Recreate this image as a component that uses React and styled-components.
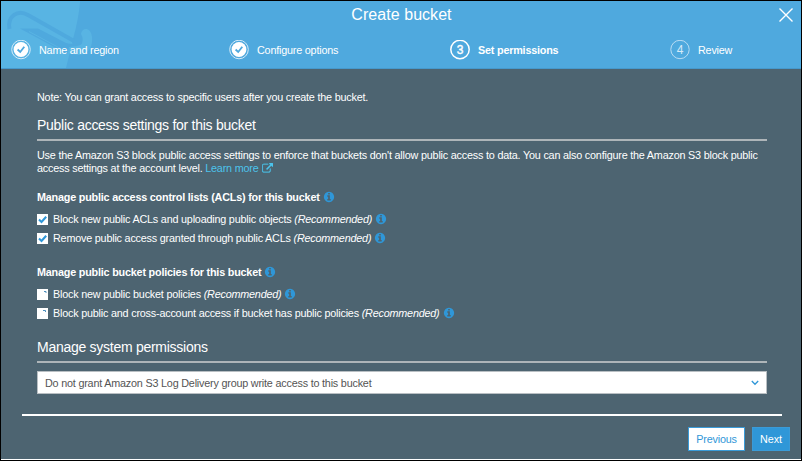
import React from "react";
import styled, { createGlobalStyle } from "styled-components";

const GlobalStyle = createGlobalStyle`
  *, *::before, *::after { box-sizing: border-box; }
  body { margin: 0; }
`;

const Dialog = styled.div`
  width: 802px;
  height: 461px;
  display: flex;
  flex-direction: column;
  border: 1px solid #000;
  background: #4d6471;
  color: #fff;
  font-family: "Liberation Sans", Arial, sans-serif;
  font-size: 10.8px;
  letter-spacing: -0.2px;
  box-shadow: inset 0 -1px 0 #fff;
`;

const Header = styled.header`
  position: relative;
  height: 68px;
  background: #4fa9de;
  border-bottom: 1px solid #4699cd;
`;

const BucketArt = styled.svg`
  position: absolute;
  left: 0;
  top: 0;
`;

const TitleBar = styled.div`
  position: relative;
  height: 28px;
  display: grid;
  grid-template-columns: 1fr auto 1fr;
  align-items: center;
  padding: 0 7px 0 8px;
`;

const Title = styled.h1`
  grid-column: 2;
  margin: 0;
  font-size: 16px;
  line-height: 26px;
  font-weight: 400;
  letter-spacing: 0.05px;
`;

const CloseButton = styled.button`
  justify-self: end;
  width: 16px;
  height: 16px;
  padding: 0;
  border: 0;
  background: none;
  display: flex;
`;

const Steps = styled.ol`
  position: relative;
  margin: 0;
  padding: 0 0 0 10px;
  list-style: none;
  height: 40px;
  display: grid;
  grid-template-columns: 218px 221px 220px auto;
`;

const Step = styled.li`
  height: 41px;
  display: flex;
  align-items: center;
  gap: 8px;
  font-weight: ${(p) => (p.$current ? 700 : 400)};
`;

const Body = styled.main`
  padding: 20px 34px 0 36px;
  height: 345px;
`;

const Note = styled.p`
  margin: 0;
  line-height: 16px;
`;

const SectionTitle = styled.h2`
  margin: ${(p) => p.$top}px 0 0;
  height: 27px;
  line-height: 23px;
  font-size: 14px;
  letter-spacing: -0.27px;
  font-weight: 400;
  border-bottom: 2px solid #aeb5b9;
`;

const Description = styled.p`
  margin: 8px 0 0;
  line-height: 13px;
  white-space: nowrap;
`;

const LearnMore = styled.a`
  color: #4cc3ec;
  svg { vertical-align: -2px; margin-left: 1px; }
`;

const GroupTitle = styled.h3`
  margin: ${(p) => p.$top}px 0 5px;
  display: flex;
  align-items: center;
  gap: 3px;
  height: 14px;
  font-size: 10.8px;
  font-weight: 700;
`;

const Option = styled.label`
  display: flex;
  align-items: center;
  height: 19px;
  white-space: pre;
`;

const Box = styled.span`
  width: 11px;
  height: 11px;
  margin: 1px 5px 0 0;
  display: flex;
  background: #fff;
`;

const OptionText = styled.span`
  margin-right: 3px;
`;

const Select = styled.div`
  margin-top: 8px;
  height: 23px;
  padding: 0 7px;
  display: flex;
  align-items: center;
  justify-content: space-between;
  background: #fff;
  border: 1px solid #b9bfc3;
  color: #545454;
`;

const Footer = styled.footer`
  margin: 0 11px 0 21px;
  display: flex;
  flex-direction: column;
`;

const FooterRule = styled.div`
  height: 2px;
  margin-right: 8px;
  background: #fff;
`;

const Actions = styled.div`
  margin-top: 11px;
  display: flex;
  justify-content: flex-end;
  gap: 7px;
`;

const Button = styled.button`
  width: ${(p) => p.$width}px;
  height: 24px;
  padding: 0;
  border: 1px solid #3a9bd8;
  background: ${(p) => (p.$primary ? "#2f97d8" : "#fff")};
  color: ${(p) => (p.$primary ? "#fff" : "#2f97d8")};
  font: 10.8px "Liberation Sans", Arial, sans-serif;
  letter-spacing: ${(p) => (p.$primary ? 0 : -0.2)}px;
`;

const Info = () => (
  <svg width="12" height="12" viewBox="0 0 1792 1792" fill="#2f97d8">
    <path d="M1152 1376v-160q0-14-9-23t-23-9h-96v-512q0-14-9-23t-23-9h-320q-14 0-23 9t-9 23v160q0 14 9 23t23 9h96v320h-96q-14 0-23 9t-9 23v160q0 14 9 23t23 9h448q14 0 23-9t9-23zm-128-896v-160q0-14-9-23t-23-9h-192q-14 0-23 9t-9 23v160q0 14 9 23t23 9h192q14 0 23-9t9-23zm640 416q0 209-103 385.5t-279.5 279.5-385.5 103-385.5-103-279.5-279.5-103-385.5 103-385.5 279.5-279.5 385.5-103 385.5 103 279.5 279.5 103 385.5z" />
  </svg>
);

const External = () => (
  <svg width="11" height="11" viewBox="0 0 1792 1792" fill="#4cc3ec" stroke="#4cc3ec" strokeWidth="40">
    <path d="M1408 928v320q0 119-84.5 203.5t-203.500 84.500h-832q-119 0-203.500-84.500t-84.500-203.500v-832q0-119 84.500-203.500t203.500-84.500h704q14 0 23 9t9 23v64q0 14-9 23t-23 9h-704q-66 0-113 47t-47 113v832q0 66 47 113t113 47h832q66 0 113-47t47-113v-320q0-14 9-23t23-9h64q14 0 23 9t9 23zm384-864v512q0 26-19 45t-45 19-45-19l-176-176-652 652q-10 10-23 10t-23-10l-114-114q-10-10-10-23t10-23l652-652-176-176q-19-19-19-45t19-45 45-19h512q26 0 45 19t19 45z" />
  </svg>
);

const DoneMark = () => (
  <svg width="20" height="20" viewBox="0 0 20 20" fill="none">
    <circle cx="10" cy="9.500" r="9.300" stroke="#d3eaf8" strokeWidth="1" />
    <circle cx="10" cy="9.500" r="7.400" fill="#fff" />
    <path d="M6.600 9.500 9.200 12 13.300 6.700" stroke="#4fa9de" strokeWidth="1.800" />
  </svg>
);

const StepNumber = styled.text`
  font-size: 12px;
  letter-spacing: 0;
  font-weight: 400;
  text-anchor: middle;
  stroke-width: 0.4px;
  stroke: ${(p) => (p.$current ? "#fff" : "none")};
  fill: ${(p) => (p.$current ? "#fff" : "#d6ebf8")};
`;

const NumberMark = ({ n, current }) => (
  <svg width="20" height="20" viewBox="0 0 20 20" fill="none">
    <circle cx="10" cy="9.500" r="9.200" stroke={current ? "#fff" : "#b9dcf3"} strokeWidth={current ? 1.5 : 1} />
    <StepNumber x="10" y="14" $current={current}>{n}</StepNumber>
  </svg>
);

const steps = [
  { label: "Name and region", done: true },
  { label: "Configure options", done: true },
  { label: "Set permissions", current: true },
  { label: "Review" },
];

const CheckOption = ({ checked, tick, children }) => (
  <Option>
    <Box>
      <svg width="11" height="11" viewBox="0 0 11 11" fill="none">
        {checked ? (
          <path d="M2 5.600 4.500 8 9.200 2.800" stroke="#2f97d8" strokeWidth="2.100" />
        ) : (
          <path d={tick} stroke="#4d8fbd" strokeWidth="1" />
        )}
      </svg>
    </Box>
    <OptionText>
      {children} <i>(Recommended)</i>
    </OptionText>
    <Info />
  </Option>
);

export default function App() {
  return (
    <>
      <GlobalStyle />
      <Dialog>
        <Header>
          <BucketArt width="100" height="67" viewBox="1 1 100 67" fill="none">
            <path d="M0 0H80.300Q78.500 20 73 39L66 68H0Z" fill="#58b4e3" />
            <path d="M81 34C82 27 91 27 92 37C93 48 88 54 79 55L66 53L71 43C79 47 86 42 81 34Z" fill="#58b4e3" />
            <path d="M9.500 29C7 16 18 9 28 15L74 41" stroke="#4fa9de" strokeWidth="4" />
            <path d="M20 28.500H38L66 43Q77 46 82 40Q84 45 77 46L69 47L67 54Z" fill="#4fa9de" />
            <path d="M29 31.500L67 52" stroke="#58b4e3" strokeWidth="1" />
          </BucketArt>
          <TitleBar>
            <span />
            <Title>Create bucket</Title>
            <CloseButton aria-label="Close">
              <svg width="16" height="16" viewBox="0 0 16 16" stroke="#fff" strokeWidth="1.400">
                <path d="M1.500 1.500 14.500 14.500M14.500 1.500 1.500 14.500" />
              </svg>
            </CloseButton>
          </TitleBar>
          <Steps>
            {steps.map((s, i) => (
              <Step key={s.label} $current={s.current}>
                {s.done ? <DoneMark /> : <NumberMark n={i + 1} current={s.current} />}
                {s.label}
              </Step>
            ))}
          </Steps>
        </Header>
        <Body>
          <Note>Note: You can grant access to specific users after you create the bucket.</Note>
          <SectionTitle $top={9}>Public access settings for this bucket</SectionTitle>
          <Description>
            Use the Amazon S3 block public access settings to enforce that buckets don't allow public access to data. You can also configure the Amazon S3 block public
            <br />
            access settings at the account level. <LearnMore>Learn more <External /></LearnMore>
          </Description>
          <GroupTitle $top={15}>Manage public access control lists (ACLs) for this bucket <Info /></GroupTitle>
          <CheckOption checked>Block new public ACLs and uploading public objects</CheckOption>
          <CheckOption checked>Remove public access granted through public ACLs</CheckOption>
          <GroupTitle $top={18}>Manage public bucket policies for this bucket <Info /></GroupTitle>
          <CheckOption tick="M7 2.500H9V4">Block new public bucket policies</CheckOption>
          <CheckOption tick="M6 2.500H8.500V4">Block public and cross-account access if bucket has public policies</CheckOption>
          <SectionTitle $top={14}>Manage system permissions</SectionTitle>
          <Select>
            Do not grant Amazon S3 Log Delivery group write access to this bucket
            <svg width="8" height="6" viewBox="0 0 8 6" fill="none" stroke="#2f97d8" strokeWidth="1.300">
              <path d="M0.800 1 4 4.300 7.200 1" />
            </svg>
          </Select>
        </Body>
        <Footer>
          <FooterRule />
          <Actions>
            <Button $width={57}>Previous</Button>
            <Button $width={38} $primary>Next</Button>
          </Actions>
        </Footer>
      </Dialog>
    </>
  );
}
